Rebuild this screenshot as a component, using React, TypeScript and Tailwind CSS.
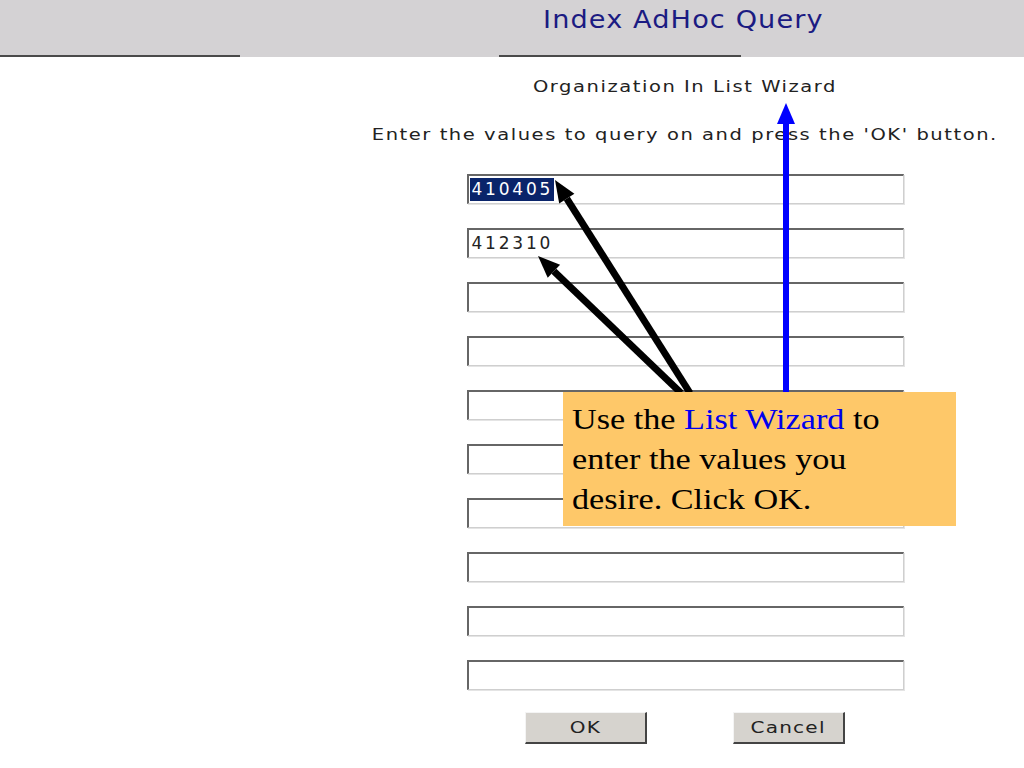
import React from "react";

const sans = { fontFamily: '"DejaVu Sans", Verdana, sans-serif' };

function Field({ children }: { children?: React.ReactNode }) {
  return (
    <div className="w-[437px] h-[30px] bg-white border-t-2 border-l-2 border-r border-b border-t-[#666] border-l-[#666] border-r-[#cfcfcf] border-b-[#cfcfcf] shadow-[1px_1px_0_#e4e4e4] flex items-center pl-[1px] text-[17px] text-[#222]">
      {children}
    </div>
  );
}

function Btn({ label, w }: { label: string; w: string }) {
  return (
    <div
      className={`${w} h-[32px] bg-[#d6d3ce] border-t border-l border-t-[#f4f4f4] border-l-[#f4f4f4] border-r-2 border-b-2 border-r-[#444] border-b-[#444] flex items-center justify-center text-[16px] text-[#222]`}
    >
      <span className="inline-block scale-x-[1.25] tracking-[1px]">{label}</span>
    </div>
  );
}

export default function App() {
  const values = ["410405", "412310", "", "", "", "", "", "", "", ""];
  return (
    <div className="relative w-[1024px] h-[768px] bg-white overflow-hidden" style={sans}>
      <header className="h-[57px] bg-[#d4d2d4] flex flex-col">
        <div className="flex-1 pl-[543px] pt-[5px] text-[24px] leading-[30px] text-[#1b1b82]">
          <span className="inline-block origin-left scale-x-[1.13] tracking-[1px]">Index AdHoc Query</span>
        </div>
        <div className="h-[2px] flex">
          <div className="w-[240px] bg-[#4a4a4a]" />
          <div className="w-[259px]" />
          <div className="w-[242px] bg-[#4a4a4a]" />
        </div>
      </header>

      <main className="pl-[346px] flex flex-col items-center text-[#222]">
        <p className="mt-[20px] h-[20px] leading-[20px] text-[15px]">
          <span className="inline-block scale-x-[1.3] tracking-[1.2px]">Organization In List Wizard</span>
        </p>
        <p className="mt-[28px] h-[20px] leading-[20px] text-[15px]">
          <span className="inline-block scale-x-[1.3] tracking-[1.2px]">
            Enter the values to query on and press the 'OK' button.
          </span>
        </p>
        <div className="mt-[29px] flex flex-col gap-[24px]">
          {values.map((v, i) => (
            <Field key={i}>
              {i === 0 ? (
                <span className="bg-[#0a246a] text-white pl-[2px] pr-[1px] leading-[23px] tracking-[2.8px]">{v}</span>
              ) : (
                <span className="pl-[2px] tracking-[2.8px]">{v}</span>
              )}
            </Field>
          ))}
        </div>
        <div className="mt-[22px] flex gap-[86px]">
          <Btn label="OK" w="w-[122px]" />
          <Btn label="Cancel" w="w-[112px]" />
        </div>
      </main>

      <svg className="absolute left-0 top-0" width="1024" height="768" viewBox="0 0 1024 768">
        <line x1="786" y1="393" x2="786" y2="120" stroke="#0000ff" strokeWidth="6" />
        <polygon points="786,103 777,124 795,124" fill="#0000ff" />
        <line x1="690" y1="393" x2="566.8" y2="198.6" stroke="#000" strokeWidth="7" />
        <polygon points="555,180 574.4,193.8 559.2,203.4" fill="#000" />
        <line x1="681" y1="393" x2="553.9" y2="271.2" stroke="#000" strokeWidth="7" />
        <polygon points="538,256 560.1,264.7 547.7,277.7" fill="#000" />
      </svg>

      <div
        className="absolute left-[563px] top-[392px] w-[393px] h-[134px] bg-[#fec869] pl-[9px] pt-[7px] text-[30px] leading-[40px] text-black"
        style={{ fontFamily: '"Liberation Serif", "Times New Roman", serif' }}
      >
        <div className="origin-left scale-x-[1.14]">
          Use the <span className="text-[#0000ee]">List Wizard</span> to
          <br />
          enter the values you
          <br />
          desire. Click OK.
        </div>
      </div>
    </div>
  );
}
